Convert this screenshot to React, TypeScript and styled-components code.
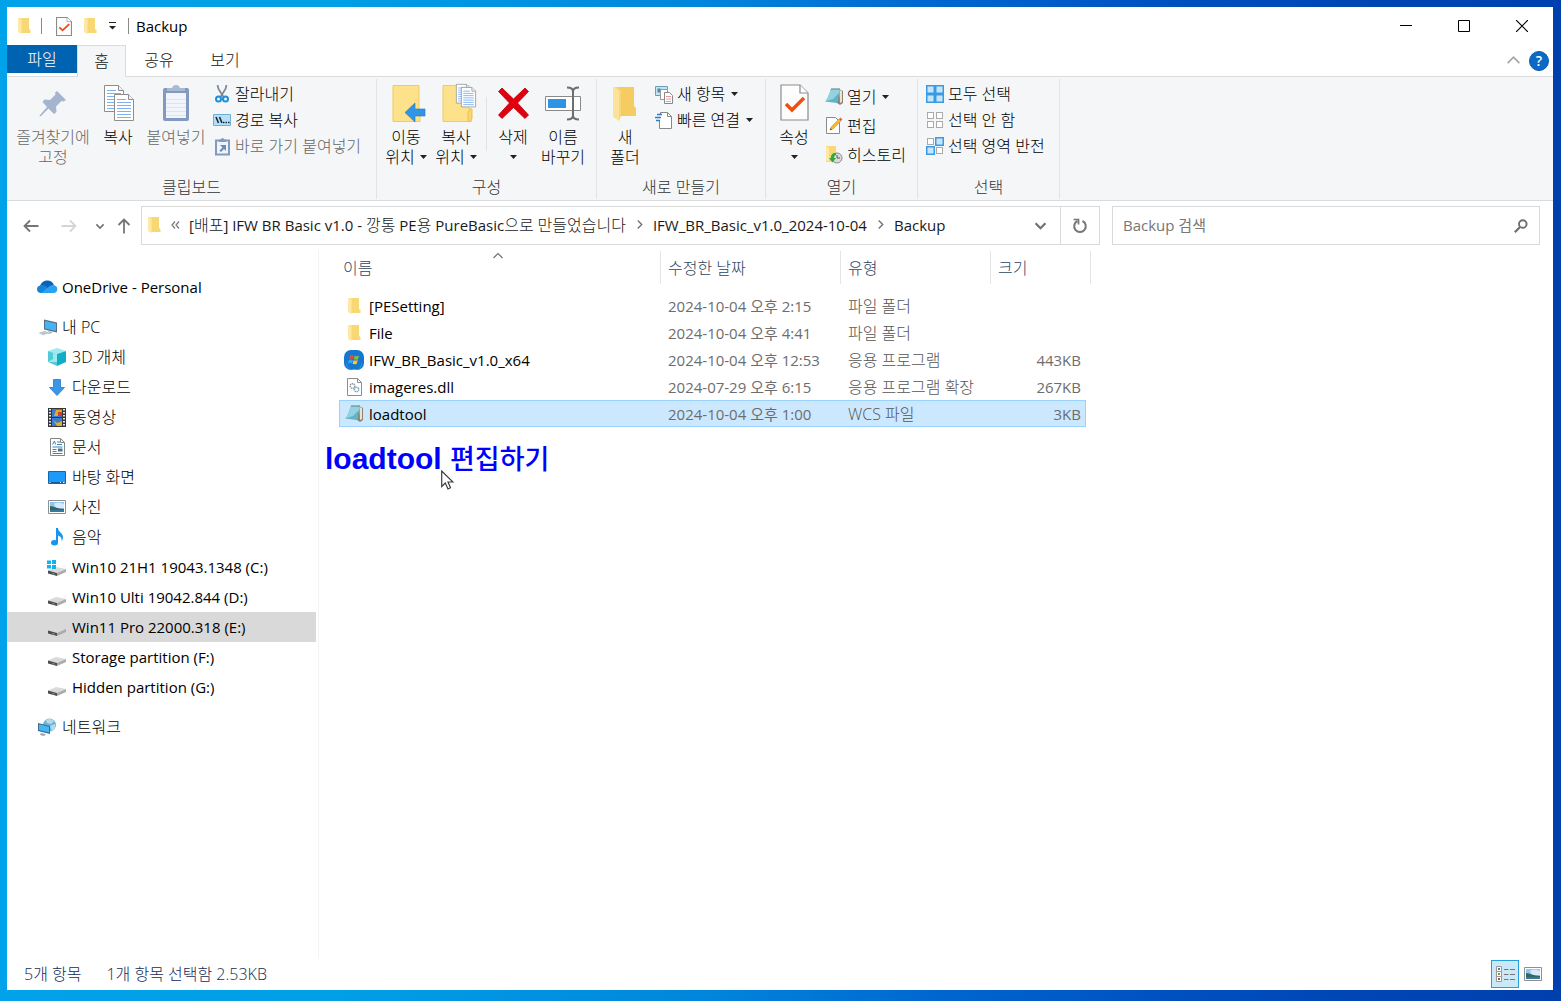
import React from "react";
import styled, { createGlobalStyle } from "styled-components";

const FONT = `"Open Sans", "Noto Sans CJK KR", sans-serif`;

const Global = createGlobalStyle`
  *, *::before, *::after { box-sizing: border-box; }
  body { margin: 0; }
  button, input { font: inherit; color: inherit; }
  button { border: 0; background: none; padding: 0; cursor: default; }
  ul { list-style: none; margin: 0; padding: 0; }
  svg { display: block; flex: none; }
`;

/* ---------- window frame ---------- */

const Desktop = styled.div`
  min-height: 100vh;
  display: flex;
  padding: 7px 8px 11px 7px;
  background: linear-gradient(90deg, #00a2ea 0%, #009fe6 22%, #0086dc 45%, #0067d0 60%, #0050c0 75%, #0045b4 88%, #0040ae 100%);
  font: 16px/20px ${FONT};
  color: #000;
`;

const Window = styled.div`
  flex: 1;
  min-width: 0;
  display: flex;
  flex-direction: column;
  background: #fff;
`;

const TitleBar = styled.header`
  display: flex;
  align-items: center;
  height: 38px;
  padding-left: 10px;
`;

const QuickTools = styled.div`
  display: flex;
  align-items: center;
  gap: 11px;
`;

const QuickButton = styled.button`
  display: flex;
  align-items: center;
  justify-content: center;
`;

const Bar = styled.span<{ $before: number; $after: number }>`
  width: 1px;
  height: 16px;
  margin: 0 ${(p) => p.$after}px 0 ${(p) => p.$before}px;
  background: #8a8a8a;
`;

const Title = styled.h1`
  flex: 1;
  margin: 0;
  font-size: 15px;
  font-weight: 400;
  line-height: 20px;
`;

const Caption = styled.div`
  display: flex;
  align-self: stretch;
  padding-right: 2px;
`;

const CaptionButton = styled.button`
  width: 58px;
  display: flex;
  align-items: center;
  justify-content: center;
`;

/* ---------- tabs and ribbon ---------- */

const TabBar = styled.nav`
  display: flex;
  height: 32px;
  border-bottom: 1px solid #dadbdc;
`;

const FileTab = styled.button`
  width: 70px;
  height: 28px;
  background: #0063b1;
  color: #fff;
  font-weight: 300;
`;

const Tab = styled.button<{ $active?: boolean }>`
  width: ${(p) => (p.$active ? 49 : 66)}px;
  height: ${(p) => (p.$active ? 32 : 31)}px;
  padding-bottom: 2px;
  border: ${(p) => (p.$active ? "1px solid #dadbdc" : "0")};
  border-bottom: 0;
  background: ${(p) => (p.$active ? "#f5f6f7" : "transparent")};
  color: #111;
  font-weight: 300;
`;

const TabEnd = styled.div`
  margin-left: auto;
  display: flex;
  align-items: center;
  gap: 9px;
  padding-right: 4px;
`;

const HelpButton = styled.button`
  width: 20px;
  height: 20px;
  border-radius: 50%;
  border: 1px solid #0b5ba5;
  background: #0a6ac8;
  color: #fff;
  font-size: 14px;
  font-weight: 600;
  line-height: 18px;
`;

const Ribbon = styled.div`
  display: flex;
  height: 124px;
  padding: 2px 0 1px;
  border-bottom: 1px solid #dadbdc;
  background: #f5f6f7;
  font-weight: 300;
`;

const Group = styled.section<{ $width: number; $pad: number }>`
  width: ${(p) => p.$width}px;
  display: flex;
  flex-direction: column;
  justify-content: space-between;
  padding-left: ${(p) => p.$pad}px;
  border-right: 1px solid #e2e3e4;
`;

const GroupBody = styled.div`
  display: flex;
  align-items: flex-start;
`;

const GroupLabel = styled.h2<{ $pad: number }>`
  margin: 0 0 0 -${(p) => p.$pad}px;
  font-size: 16px;
  font-weight: inherit;
  line-height: 24px;
  text-align: center;
  color: #333;
`;

const BigButton = styled.button<{ $width: number; $muted?: boolean }>`
  width: ${(p) => p.$width}px;
  display: flex;
  flex-direction: column;
  align-items: center;
  padding-top: 5px;
  white-space: nowrap;
  color: ${(p) => (p.$muted ? "#666" : "#000")};
`;

const BigIcon = styled.span`
  height: 43px;
  display: flex;
  align-items: flex-start;
`;

const Line = styled.span`
  display: flex;
  align-items: center;
  gap: 5px;
  height: 20px;
`;

const Rule = styled.span`
  width: 1px;
  height: 54px;
  margin: 18px 1px 0 5px;
  background: #e2e3e4;
`;

const Stack = styled.div<{ $indent: number; $row: number; $top?: number }>`
  display: grid;
  grid-auto-rows: ${(p) => p.$row}px;
  margin-left: ${(p) => p.$indent}px;
  padding-top: ${(p) => p.$top ?? 2}px;
`;

const SmallButton = styled.button<{ $muted?: boolean }>`
  display: flex;
  align-items: center;
  gap: 4px;
  white-space: nowrap;
  color: ${(p) => (p.$muted ? "#666" : "#000")};
`;

const IconSlot = styled.span`
  width: 18px;
  display: flex;
  justify-content: center;
`;

const MenuMark = styled.span`
  margin-left: 2px;
`;

/* ---------- address bar ---------- */

const AddressRow = styled.div`
  display: flex;
  align-items: center;
  height: 49px;
  padding: 0 13px 0 9px;
`;

const NavButton = styled.button<{ $width: number }>`
  width: ${(p) => p.$width}px;
  height: 38px;
  display: flex;
  align-items: center;
  justify-content: center;
`;

const AddressField = styled.div`
  flex: 1;
  min-width: 0;
  height: 39px;
  margin-right: 12px;
  display: flex;
  align-items: stretch;
  border: 1px solid #d9d9d9;
`;

const Crumbs = styled.div`
  flex: 1;
  min-width: 0;
  display: flex;
  align-items: center;
  padding: 0 0 2px 5px;
  overflow: hidden;
  white-space: nowrap;
  font-size: 15px;
`;

const Crumb = styled.button`
  color: #1a1a1a;
`;

const HangulRun = styled.span`
  font-size: 16px;
  font-weight: 300;
`;

const CrumbArrow = styled.span`
  width: 27px;
  display: flex;
  justify-content: center;
`;

const CrumbStart = styled.span`
  width: 28px;
  display: flex;
  justify-content: center;
`;

const FieldButton = styled.button<{ $line?: boolean }>`
  width: 39px;
  display: flex;
  align-items: center;
  justify-content: center;
  border-left: ${(p) => (p.$line ? "1px solid #d9d9d9" : "0")};
`;

const SearchField = styled.label`
  width: 428px;
  height: 39px;
  display: flex;
  align-items: center;
  padding: 0 11px 0 10px;
  border: 1px solid #d9d9d9;
`;

const SearchInput = styled.input`
  flex: 1;
  min-width: 0;
  border: 0;
  padding: 0 0 2px;
  outline: 0;
  background: none;
  font-size: 15px;
  line-height: 20px;
  &::placeholder {
    color: #767676;
    opacity: 1;
  }
`;

/* ---------- body ---------- */

const Body = styled.div`
  flex: 1;
  display: flex;
`;

const Sidebar = styled.nav`
  width: 312px;
  padding: 22px 2px 0 0;
  border-right: 1px solid #f3f3f3;
`;

const Tree = styled.ul`
  & + & {
    margin-top: 10px;
  }
`;

const TreeItem = styled.button<{ $child?: boolean; $selected?: boolean; $latin?: boolean }>`
  width: 100%;
  height: 30px;
  display: flex;
  align-items: center;
  gap: ${(p) => (p.$child ? 5 : 4)}px;
  padding-left: ${(p) => (p.$child ? 40 : 30)}px;
  background: ${(p) => (p.$selected ? "#d9d9d9" : "transparent")};
  font-size: ${(p) => (p.$latin ? 15 : 16)}px;
  font-weight: ${(p) => (p.$latin ? 400 : 300)};
  text-align: left;
`;

const TreeIcon = styled.span<{ $child?: boolean }>`
  width: ${(p) => (p.$child ? 20 : 21)}px;
  display: flex;
  justify-content: center;
`;

const Main = styled.main`
  flex: 1;
  min-width: 0;
  padding-left: 20px;
`;

const Table = styled.table`
  table-layout: fixed;
  width: 752px;
  border-collapse: separate;
  border-spacing: 0;
  font-size: 15px;
`;

const HeadCell = styled.th<{ $width: number }>`
  width: ${(p) => p.$width}px;
  height: 42px;
  padding: 1px 0 8px;
  font-size: 16px;
  font-weight: 300;
  text-align: left;
  vertical-align: top;
  color: #2c4566;
`;

const HeadButton = styled.button<{ $line?: boolean; $pad?: number }>`
  display: block;
  position: relative;
  width: 100%;
  height: 33px;
  padding-left: ${(p) => p.$pad ?? 7}px;
  border-right: ${(p) => (p.$line ? "1px solid #e5e5e5" : "0")};
  text-align: left;
`;

const SortMark = styled.span`
  position: absolute;
  top: 0;
  left: 50%;
  margin-left: -7px;
`;

const Row = styled.tr<{ $selected?: boolean }>`
  height: 27px;
  & > td {
    border: solid ${(p) => (p.$selected ? "#99d1ff" : "transparent")};
    border-width: 1px 0;
    background: ${(p) => (p.$selected ? "#cce8ff" : "transparent")};
  }
  & > td:first-child {
    border-left-width: 1px;
  }
  & > td:nth-child(4) {
    border-right-width: 1px;
  }
  & > td:last-child {
    border: 0;
    background: none;
  }
`;

const Cell = styled.td<{ $right?: boolean }>`
  padding: 0 ${(p) => (p.$right ? 4 : 0)}px 0 ${(p) => (p.$right ? 0 : 7)}px;
  white-space: nowrap;
  text-align: ${(p) => (p.$right ? "right" : "left")};
  color: #6d6d6d;
`;

const TypeCell = styled(Cell)`
  font-size: 16px;
  font-weight: 300;
  color: #555;
`;

const NameCell = styled.td`
  padding: 0 0 0 4px;
  color: #000;
`;

const FileName = styled.span`
  display: flex;
  align-items: center;
  gap: 5px;
`;

const FileIcon = styled.span`
  width: 20px;
  display: flex;
  justify-content: center;
`;

const Note = styled.p`
  position: relative;
  width: max-content;
  margin: 13px 0 0 -14px;
  font: 700 30px/38px "Liberation Sans", "Noto Sans CJK KR", sans-serif;
  color: #00f;
`;

const NoteKorean = styled.span`
  font-size: 27px;
  font-weight: 500;
`;

const Pointer = styled.span`
  position: absolute;
  left: 116px;
  top: 30px;
`;

const StatusBar = styled.footer`
  display: flex;
  align-items: center;
  gap: 25px;
  height: 32px;
  padding: 0 6px 0 17px;
  font-weight: 300;
  color: #142c55;
`;

const ViewButtons = styled.div`
  margin-left: auto;
  display: flex;
  align-items: center;
`;

const ViewButton = styled.button<{ $on?: boolean }>`
  width: 28px;
  height: 28px;
  display: flex;
  align-items: center;
  justify-content: center;
  border: 1px solid ${(p) => (p.$on ? "#26a0da" : "transparent")};
  background: ${(p) => (p.$on ? "#cbe8f6" : "transparent")};
`;

/* ---------- icons ---------- */

const Folder = () => (
  <svg width="14" height="18" viewBox="0 0 14 18">
    <path d="M3 1h9v11l1.500 1v3H3z" fill="#f8d775" />
    <path d="M1 1l3 2v14l-3-2z" fill="#fde9a5" />
    <path d="M4 3v14l1-1.500V1H1z" fill="#fbe08e" />
  </svg>
);

const Caret = () => (
  <svg width="7" height="4" viewBox="0 0 7 4">
    <path d="M0 0h7L3.500 4z" fill="#222" />
  </svg>
);

const CheckPage = ({ w, h }: { w: number; h: number }) => (
  <svg width={w} height={h} viewBox="0 0 29 37" preserveAspectRatio="none">
    <path d="M1 1h19l8 8v27H1z" fill="#fdfdfd" stroke="#8c8c8c" strokeWidth={w < 20 ? 2 : 1.2} />
    <path d="M20 1v8h8" fill="#fff" stroke="#8c8c8c" strokeWidth="1.200" />
    <path d="M6 20l6 6 12-12" fill="none" stroke="#f04e12" strokeWidth="3.500" />
  </svg>
);

const Pin = () => (
  <svg width="28" height="40" viewBox="0 0 28 40">
    <path d="M18 7l9 9-2.500 1.500-2-.5-5.500 5.500.5 5.500-2.500 2-5.500-5.500L2 32l-1.500.5L1 31l7-8-4.500-5 2-2.500 5.500.5 5.500-5.500-.5-2z" fill="#a4b5d0" />
  </svg>
);

const sheet = (x: number, y: number) => (
  <g transform={`translate(${x} ${y})`}>
    <path d="M.5.5h14l5 5v21H.5z" fill="#fff" stroke="#8d8d8d" />
    <path d="M14.500.5v5h5" fill="#f2f2f2" stroke="#8d8d8d" />
    <path d="M3 5.500h9M3 8.500h14M3 11.500h14M3 14.500h14M3 17.500h14M3 20.500h14M3 23.500h14" stroke="#7db2f2" strokeWidth="1.200" />
  </g>
);

const CopyPages = () => (
  <svg width="31" height="38" viewBox="0 0 31 38">
    {sheet(1, 1)}
    {sheet(11, 10)}
  </svg>
);

const Clipboard = () => (
  <svg width="28" height="38" viewBox="0 0 28 38">
    <rect x="1" y="4" width="26" height="33" rx="2" fill="#8299c0" />
    <rect x="4" y="9" width="20" height="25" fill="#f1f5fb" />
    <path d="M5 7h18V4h-5c-1-4-7-4-8 0H5z" fill="#aab9d2" />
    <path d="M4 15.500h20M4 19.500h20M4 23.500h20M4 27.500h20M4 31.500h20" stroke="#dbe4f1" />
  </svg>
);

const Scissors = () => (
  <svg width="14" height="18" viewBox="0 0 14 18">
    <path d="M2.500 0l1 4 5 8M11.500 0l-1 4-5 8" fill="none" stroke="#7d8790" strokeWidth="1.700" />
    <circle cx="3.500" cy="14" r="2.500" fill="none" stroke="#1d8fdd" strokeWidth="2" />
    <circle cx="10.500" cy="14" r="2.500" fill="none" stroke="#1d8fdd" strokeWidth="2" />
  </svg>
);

const PathIcon = () => (
  <svg width="18" height="12" viewBox="0 0 18 12">
    <path d="M.5.5h17v11H.5z" fill="#b6e0f9" stroke="#71aed4" />
    <path d="M3 3l2.500 6M6.500 3L9 9" stroke="#1a2a38" strokeWidth="1.600" />
    <path d="M10 8.500h1.500M12.500 8.500H14M15 8.500h1.500" stroke="#1a2a38" strokeWidth="1.500" />
  </svg>
);

const ShortcutPaste = () => (
  <svg width="15" height="19" viewBox="0 0 15 19">
    <path d="M1 3.500h13v14H1z" fill="#eff4fb" stroke="#8299c0" strokeWidth="2" />
    <path d="M4 5V2.500h2a1.500 1.500 0 013 0h2V5z" fill="#8299c0" />
    <path d="M5 8h6v6L9 12l-3 3-1.500-1.500 3-3z" fill="#7189b2" />
  </svg>
);

const MoveTo = () => (
  <svg width="34" height="40" viewBox="-2 0 34 40" overflow="visible">
    <path d="M2 1.500h26v30h1v6H2z" fill="#fde18b" stroke="#f1cc5c" />
    <path d="M14 28.500L24 19v6h10v7H24v6z" fill="#3294e4" stroke="#2079c8" strokeWidth=".6" />
  </svg>
);

const CopyTo = () => (
  <svg width="34" height="40" viewBox="-3 0 34 40" overflow="visible">
    <path d="M1 1.500h26V25h2v12.500H1z" fill="#fde18b" stroke="#f1cc5c" />
    <path d="M26 37.500V28l2-3h2v9l-1 3.500z" fill="#fbd66e" stroke="#ecc24f" />
    <g transform="translate(14 0) scale(.72)">{sheet(0, 0)}</g>
    <g transform="translate(19 3) scale(.75)">{sheet(0, 0)}</g>
  </svg>
);

const DeleteX = () => (
  <svg width="34" height="40" viewBox="-1 0 34 40">
    <path d="M1.500 7.500L5 4l11.500 11L28 4l3.500 3.500L20.500 19 31.500 31 28 34.500 16.500 23.500 5 34.500 1.500 31 12.500 19z" fill="#e2000f" stroke="#b3000c" strokeWidth=".8" />
  </svg>
);

const Rename = () => (
  <svg width="36" height="40" viewBox="0 0 36 40">
    <path d="M.5 12.500h35v14H.5z" fill="#fff" stroke="#8a8a8a" />
    <path d="M3 15h18v9H3z" fill="#2f93e6" />
    <path d="M22 3.500c4 0 6 1 6 4v24c0 3-2 4-6 4M34 3.500c-4 0-6 1-6 4v24c0 3 2 4 6 4" fill="none" stroke="#6e6e6e" strokeWidth="2" />
  </svg>
);

const BigFolder = () => (
  <svg width="26" height="40" viewBox="0 0 26 40">
    <path d="M6 3h16v19l2 2v8H6z" fill="#f5cc62" />
    <path d="M1 3h3l5 4v24l-2 6-6-4z" fill="#fde39a" />
    <path d="M3 3h3l3 4v25l-2 5V7z" fill="#f9d67a" />
  </svg>
);

const NewItem = () => (
  <svg width="18" height="19" viewBox="0 0 18 19">
    <path d="M.5 1.500h12v9H.5z" fill="#c3e4f2" stroke="#6d9cb3" />
    <path d="M2.500 3.500h3v4h-3z" fill="#4c89a8" />
    <path d="M5.500 4.500h7v10h-7z" fill="#fff" stroke="#999" />
    <path d="M9.500 7.500h5l3 3v8h-8z" fill="#fff" stroke="#888" />
    <path d="M11 11.500h5M11 14h5M11 16.500h5" stroke="#e79d9d" />
  </svg>
);

const QuickAccess = () => (
  <svg width="18" height="19" viewBox="0 0 18 19">
    <path d="M4.500 10v7.500h12v-12l-4-4h-7v2" fill="#fff" stroke="#888" />
    <path d="M12.500 1.500v4h4" fill="none" stroke="#888" />
    <path d="M2 3.500h5M0 6.500h6M1 9.500h4" stroke="#2f7cc0" strokeWidth="1.300" />
  </svg>
);

const Notepad = () => (
  <svg width="20" height="18" viewBox="0 0 20 18">
    <path d="M15 1l4 2v12l-3 2-3-2z" fill="#8b8373" />
    <path d="M15.500 2L18 3v11l-2 1z" fill="#e9e4d8" />
    <path d="M7 1h9l-3 14-12-1.500C4 11 5 6 7 1z" fill="#5fb3c8" />
    <path d="M7 1h9l-1 4-6 6-8 2.500C4 11 5 6 7 1z" fill="#93d2df" />
    <path d="M7 1h9" stroke="#6c8d96" strokeWidth="1.200" />
  </svg>
);

const EditPage = () => (
  <svg width="18" height="19" viewBox="0 0 18 19">
    <path d="M1.500 1.500h9l4 4v12h-13z" fill="#fff" stroke="#8a8a8a" />
    <path d="M5 14l1-3 8-8 2 2-8 8z" fill="#f5b92e" stroke="#c98d1c" strokeWidth=".5" />
    <path d="M14 3l1.500-1.500 2 2L16 5z" fill="#e0605a" />
    <path d="M5 14l.5-1.800L7 13.500z" fill="#333" />
  </svg>
);

const HistoryIcon = () => (
  <svg width="18" height="19" viewBox="0 0 18 19">
    <path d="M1 1h10v8l1 1v7H1z" fill="#f8d775" />
    <path d="M1 1l3 2v14l-3-2z" fill="#fde9a5" />
    <circle cx="12" cy="13" r="5" fill="#dcdcdc" stroke="#8b8b8b" />
    <path d="M12 10v3h3" fill="none" stroke="#555" />
    <path d="M11 8c-4 0-5 2-5 5H4l3.500 4.500L11 13H9c0-2 1-3 2-3z" fill="#2fa83c" />
  </svg>
);

const Squares = ({ on }: { on: number[] }) => (
  <svg width="18" height="18" viewBox="0 0 18 18">
    {[0, 1, 2, 3].map((i) => {
      const lit = on.includes(i);
      const x = (i % 2) * 9;
      const y = i > 1 ? 9 : 0;
      const inset = lit ? 0.75 : 1.5;
      const size = lit ? 7.5 : 6;
      return (
        <rect
          key={i}
          x={x + inset}
          y={y + inset}
          width={size}
          height={size}
          fill={lit ? "#c4e5fb" : "#fff"}
          stroke={lit ? "#3c9ae3" : "#aaa"}
          strokeWidth={lit ? 1.5 : 1}
        />
      );
    })}
  </svg>
);

const Arrow = ({ turn = 0, color = "#757575" }: { turn?: number; color?: string }) => (
  <svg width="16" height="16" viewBox="0 0 16 16">
    <path d="M15.500 8H1.500M7 2.500L1.500 8 7 13.500" transform={`rotate(${turn} 8 8)`} fill="none" stroke={color} strokeWidth="1.800" />
  </svg>
);

const Chevron = ({ size = 10, turn = 0, color = "#707070", weight = 2 }: { size?: number; turn?: number; color?: string; weight?: number }) => (
  <svg width={size} height={size} viewBox="0 0 10 10" overflow="visible">
    <path d="M.5 3L5 7.500 9.500 3" transform={`rotate(${turn} 5 5)`} fill="none" stroke={color} strokeWidth={weight} />
  </svg>
);

const DoubleChevron = () => (
  <svg width="9" height="8" viewBox="0 0 9 8">
    <path d="M4 .5L1 4l3 3.500M8 .5L5 4l3 3.500" fill="none" stroke="#777" strokeWidth="1.200" />
  </svg>
);

const Refresh = () => (
  <svg width="16" height="16" viewBox="0 0 16 16">
    <path d="M10.500 3a5.800 5.800 0 11-5 0" fill="none" stroke="#777" strokeWidth="2" />
    <path d="M1.500 1.500h5v5" fill="none" stroke="#777" strokeWidth="1.700" />
  </svg>
);

const Magnifier = () => (
  <svg width="14" height="14" viewBox="0 0 14 14">
    <circle cx="8.800" cy="5" r="3.800" fill="none" stroke="#6e6e6e" strokeWidth="1.900" />
    <path d="M6 8l-5.200 5.200" stroke="#6e6e6e" strokeWidth="2.200" />
  </svg>
);

const Cloud = () => (
  <svg width="21" height="14" viewBox="0 0 20 14" preserveAspectRatio="none">
    <path d="M3 6C4 2 7 .5 10 .5c3 0 5 1.500 6 4.500l-6 4z" fill="#0a62b8" />
    <path d="M4 13a3.800 3.800 0 01-1-7.500c3-1 5 0 7 2L6 13z" fill="#1583d8" />
    <path d="M4 13l7-6c2-2 4-2.500 6-1.500A4 4 0 0116.500 13z" fill="#2ba2f0" />
  </svg>
);

const Computer = () => (
  <svg width="20" height="17" viewBox="0 0 20 17">
    <path d="M6 .5l13 3v10l-13-3z" fill="#5a6d7c" />
    <path d="M7 2l11 2.500v7.500L7 9.500z" fill="#45b3f4" />
    <path d="M11 12l4 1-3 2-4-1z" fill="#b3bac0" />
    <path d="M0 14l7-2 5 2-7 2.500z" fill="#d2d6d9" />
    <path d="M2 14l6-1.500M4 15l6-1.500" stroke="#a5abb0" strokeWidth=".6" />
  </svg>
);

const Cube = () => (
  <svg width="18" height="18" viewBox="0 0 18 18">
    <path d="M9 0l9 3-9 3-9-3z" fill="#9deaf0" />
    <path d="M0 3l9 3v12l-9-4z" fill="#52cbd8" />
    <path d="M18 3L9 6v12l9-4z" fill="#10aec6" />
    <path d="M5 5l4 1v8l-9 0 5-3z" fill="#b9f1f4" opacity=".75" />
  </svg>
);

const Download = () => (
  <svg width="16" height="17" viewBox="0 0 16 17">
    <path d="M4.500.5h7v8h4L8 16.500.5 8.500h4z" fill="#3a97e8" stroke="#2079c8" strokeWidth=".8" />
  </svg>
);

const Film = () => (
  <svg width="18" height="19" viewBox="0 0 18 19">
    <path d="M0 0h18v19H0z" fill="#35353a" />
    <path d="M2 1v17M16 1v17" stroke="#e8e8e8" strokeWidth="2" strokeDasharray="1.500 1.500" />
    <path d="M4 1h10v8H4zM4 10h10v8H4z" fill="#3a7bd0" />
    <path d="M8 2h6v3l-4 3H6z" fill="#e0a930" />
    <path d="M10 4h4v4h-4z" fill="#c9442d" />
    <path d="M5 12l4 3 5-2v5H9z" fill="#d4b02e" />
  </svg>
);

const Doc = () => (
  <svg width="15" height="18" viewBox="0 0 15 18">
    <path d="M.5.5h10l4 4v13H.5z" fill="#fff" stroke="#858585" />
    <path d="M10.500.5v4h4" fill="none" stroke="#858585" />
    <path d="M2.500 6.500L4.500 3l1 3.500M7 4h3M7 6.500h5M2.500 9h10M2.500 11.500h4M2.500 13.500h4M2.500 15.500h10" fill="none" stroke="#3d86bd" />
    <path d="M8 10.500h4.500v3H8z" fill="#4a7390" />
  </svg>
);

const DesktopIcon = () => (
  <svg width="18" height="13" viewBox="0 0 18 13">
    <path d="M.5.5h17v12H.5z" fill="#1b9bf7" stroke="#1268ae" />
    <path d="M1 11.500h16" stroke="#0e5a9a" />
    <path d="M1.500 11.500h1M12 11.500h1M15 11.500h1.500" stroke="#fff" />
  </svg>
);

const Picture = () => (
  <svg width="18" height="14" viewBox="0 0 18 14">
    <path d="M.5.5h17v13H.5z" fill="#fff" stroke="#8f8f8f" />
    <path d="M2 2h14v10H2z" fill="#8fc5f3" />
    <path d="M6 4c3-2 7-1 10 0v4H8z" fill="#d6eaf9" />
    <path d="M2 6c4 0 7 3 14 3v3H2z" fill="#2f6a5b" />
    <path d="M2 10h14v2H2z" fill="#3b74a8" />
  </svg>
);

const Music = () => (
  <svg width="12" height="18" viewBox="0 0 12 18">
    <ellipse cx="3.500" cy="14.800" rx="3.500" ry="2.700" fill="#1496ee" />
    <path d="M5 0h2c0 4 5 5 5 9 0 1.500-.5 3-1.500 4 .5-3-1-5-3.500-5.500V15H5z" fill="#1496ee" />
  </svg>
);

const Drive = ({ win }: { win?: boolean }) => (
  <svg width="20" height="17" viewBox="0 0 20 17">
    <path d="M1 11.500l8-3.500 10 2-9 4z" fill="#dadada" />
    <path d="M1 11.500l9 2.500v3l-9-2.500z" fill="#4b4f4c" />
    <path d="M10 14l9-4v3l-9 4z" fill="#ababab" />
    <path d="M5.500 14.500l2 .6" stroke="#53d06a" />
    {win && <path d="M0 1.500h4v3.500H0zM5 1h4v4H5zM0 6h4v3.500H0zM5 6h4v4H5z" fill="#10b3ee" />}
  </svg>
);

const Network = () => (
  <svg width="20" height="18" viewBox="1 0 20 18">
    <circle cx="12.500" cy="7" r="6.500" fill="#6db3d8" />
    <path d="M9 2c3-2 6-1 8 1l-3 3-4-1zM13 8l5-2c1 3-1 6-3 7z" fill="#b5dbe8" />
    <path d="M1 5l12 3v8L1 13z" fill="#3b6d91" />
    <path d="M2 6.200l10 2.600v5.700L2 12z" fill="#47b4f4" />
    <path d="M4 15l5 1.200L7 18l-4-1z" fill="#9aa7b1" />
  </svg>
);

const AppIcon = () => (
  <svg width="20" height="20" viewBox="0 0 20 20">
    <rect width="20" height="20" rx="7" fill="#1577cf" />
    <path d="M2 12a8 8 0 0016 0v2a6 6 0 01-6 5H8a6 6 0 01-6-5z" fill="#35c3f5" />
    <path d="M6 5.500c1.500-1 2.500-.5 4 0L9 9c-1.500-.5-2.500-.7-4 .2z" fill="#ef4a2a" />
    <path d="M10.800 5.800c1.500.6 2.700.5 4.200-.3l-1 3.800c-1.500.8-2.700.5-4.200 0z" fill="#7fc241" />
    <path d="M4.800 10c1.500-.9 2.500-.7 4 0l-1 3.500c-1.500-.6-2.500-.6-4 .2z" fill="#35a5ee" />
    <path d="M9.500 10.300c1.500.6 2.700.5 4.200-.2l-1 3.700c-1.500.8-2.700.5-4.200 0z" fill="#fcc72b" />
  </svg>
);

const DllIcon = () => (
  <svg width="15" height="18" viewBox="0 0 15 18">
    <path d="M.5.5h10l4 4v13H.5z" fill="#fff" stroke="#8d8d8d" />
    <path d="M10.500.5v4h4" fill="none" stroke="#8d8d8d" />
    <circle cx="5.500" cy="8" r="2.300" fill="none" stroke="#8a9199" strokeWidth="1.500" strokeDasharray="1.200 .6" />
    <circle cx="9.500" cy="11.500" r="2.200" fill="none" stroke="#6ea0c4" strokeWidth="1.500" strokeDasharray="1.200 .6" />
  </svg>
);

const DetailsIcon = () => (
  <svg width="19" height="17" viewBox="0 0 19 17">
    <path d="M.5.500h5v5h-5zM.5 5.500h5v5h-5zM.5 10.500h5v5h-5z" fill="#fff" stroke="#999" />
    <path d="M2 2h2v2H2z" fill="#3a8a9c" />
    <path d="M2 7h2v2H2z" fill="#a5862e" />
    <path d="M2 12h2v2H2z" fill="#c5412f" />
    <path d="M8 3.500h4.500M14 3.500h5M8 8.500h4.500M14 8.500h5M8 13.500h4.500M14 13.500h5" stroke="#777" />
  </svg>
);

const Cursor = () => (
  <svg width="13" height="20" viewBox="0 0 13 20">
    <path d="M.7 1v15.500l3.600-3.500 2.700 6 2.500-1.200L7 12h5z" fill="#fff" stroke="#3a3a44" strokeWidth="1.200" />
  </svg>
);

/* ---------- data ---------- */

type Place = { label: string; icon: React.ReactNode; child?: boolean; latin?: boolean; selected?: boolean };

const places: Place[][] = [
  [{ label: "OneDrive - Personal", icon: <Cloud />, latin: true }],
  [
    { label: "내 PC", icon: <Computer /> },
    { label: "3D 개체", icon: <Cube />, child: true },
    { label: "다운로드", icon: <Download />, child: true },
    { label: "동영상", icon: <Film />, child: true },
    { label: "문서", icon: <Doc />, child: true },
    { label: "바탕 화면", icon: <DesktopIcon />, child: true },
    { label: "사진", icon: <Picture />, child: true },
    { label: "음악", icon: <Music />, child: true },
    { label: "Win10 21H1 19043.1348 (C:)", icon: <Drive win />, child: true, latin: true },
    { label: "Win10 Ulti 19042.844 (D:)", icon: <Drive />, child: true, latin: true },
    { label: "Win11 Pro 22000.318 (E:)", icon: <Drive />, child: true, latin: true, selected: true },
    { label: "Storage partition (F:)", icon: <Drive />, child: true, latin: true },
    { label: "Hidden partition (G:)", icon: <Drive />, child: true, latin: true },
  ],
  [{ label: "네트워크", icon: <Network /> }],
];

const files = [
  { name: "[PESetting]", icon: <Folder />, date: "2024-10-04 오후 2:15", type: "파일 폴더", size: "" },
  { name: "File", icon: <Folder />, date: "2024-10-04 오후 4:41", type: "파일 폴더", size: "" },
  { name: "IFW_BR_Basic_v1.0_x64", icon: <AppIcon />, date: "2024-10-04 오후 12:53", type: "응용 프로그램", size: "443KB" },
  { name: "imageres.dll", icon: <DllIcon />, date: "2024-07-29 오후 6:15", type: "응용 프로그램 확장", size: "267KB" },
  { name: "loadtool", icon: <Notepad />, date: "2024-10-04 오후 1:00", type: "WCS 파일", size: "3KB", selected: true },
];

/* ---------- pieces ---------- */

/* Hangul is set one size above the Latin text it runs beside. */
const Mixed = ({ text }: { text: string }) => (
  <>
    {text.split(/([가-힣]+)/).map((run, i) => (i % 2 ? <HangulRun key={i}>{run}</HangulRun> : run))}
  </>
);

type BigProps = { icon: React.ReactNode; lines: string[]; width?: number; muted?: boolean; menu?: boolean };

const Big = ({ icon, lines, width = 50, muted, menu }: BigProps) => (
  <BigButton $width={width} $muted={muted}>
    <BigIcon>{icon}</BigIcon>
    {lines.map((line, i) => (
      <Line key={line}>
        {line}
        {menu && i === 1 && <Caret />}
      </Line>
    ))}
    {menu && lines.length === 1 && (
      <Line>
        <Caret />
      </Line>
    )}
  </BigButton>
);

type SmallProps = { icon: React.ReactNode; label: string; muted?: boolean; menu?: boolean };

const Small = ({ icon, label, muted, menu }: SmallProps) => (
  <SmallButton $muted={muted}>
    <IconSlot>{icon}</IconSlot>
    {label}
    {menu && (
      <MenuMark>
        <Caret />
      </MenuMark>
    )}
  </SmallButton>
);

const RibbonGroup = ({ label, width, pad, children }: { label: string; width: number; pad: number; children: React.ReactNode }) => (
  <Group $width={width} $pad={pad}>
    <GroupBody>{children}</GroupBody>
    <GroupLabel $pad={pad}>{label}</GroupLabel>
  </Group>
);

export default function App() {
  return (
    <Desktop>
      <Global />
      <Window>
        <TitleBar>
          <QuickTools>
            <QuickButton aria-label="폴더">
              <Folder />
            </QuickButton>
          </QuickTools>
          <Bar $before={10} $after={14} />
          <QuickTools>
            <QuickButton aria-label="속성">
              <CheckPage w={16} h={19} />
            </QuickButton>
            <QuickButton aria-label="새 폴더">
              <Folder />
            </QuickButton>
            <QuickButton aria-label="빠른 실행 도구 모음 사용자 지정">
              <svg width="9" height="8" viewBox="0 0 9 8">
                <path d="M1 .5h7" stroke="#222" />
                <path d="M1 4h7L4.500 7.500z" fill="#222" />
              </svg>
            </QuickButton>
          </QuickTools>
          <Bar $before={11} $after={7} />
          <Title>Backup</Title>
          <Caption>
            <CaptionButton aria-label="최소화">
              <svg width="12" height="12" viewBox="0 0 12 12">
                <path d="M0 5.500h12" stroke="#000" />
              </svg>
            </CaptionButton>
            <CaptionButton aria-label="최대화">
              <svg width="12" height="12" viewBox="0 0 12 12">
                <path d="M.5.5h11v11H.5z" fill="none" stroke="#000" />
              </svg>
            </CaptionButton>
            <CaptionButton aria-label="닫기">
              <svg width="12" height="12" viewBox="0 0 12 12">
                <path d="M0 0l12 12M12 0L0 12" stroke="#000" strokeWidth="1.200" />
              </svg>
            </CaptionButton>
          </Caption>
        </TitleBar>

        <TabBar>
          <FileTab>파일</FileTab>
          <Tab $active>홈</Tab>
          <Tab>공유</Tab>
          <Tab>보기</Tab>
          <TabEnd>
            <Chevron size={13} turn={180} color="#a5a5a5" weight={1.3} />
            <HelpButton>?</HelpButton>
          </TabEnd>
        </TabBar>

        <Ribbon>
          <RibbonGroup label="클립보드" width={370} pad={7}>
            <Big icon={<Pin />} lines={["즐겨찾기에", "고정"]} width={78} muted />
            <Big icon={<CopyPages />} lines={["복사"]} width={52} />
            <Big icon={<Clipboard />} lines={["붙여넣기"]} width={64} muted />
            <Stack $indent={5} $row={26}>
              <Small icon={<Scissors />} label="잘라내기" />
              <Small icon={<PathIcon />} label="경로 복사" />
              <Small icon={<ShortcutPaste />} label="바로 가기 붙여넣기" muted />
            </Stack>
          </RibbonGroup>
          <RibbonGroup label="구성" width={220} pad={4}>
            <Big icon={<MoveTo />} lines={["이동", "위치"]} menu />
            <Big icon={<CopyTo />} lines={["복사", "위치"]} menu />
            <Rule />
            <Big icon={<DeleteX />} lines={["삭제"]} menu />
            <Big icon={<Rename />} lines={["이름", "바꾸기"]} />
          </RibbonGroup>
          <RibbonGroup label="새로 만들기" width={169} pad={3}>
            <Big icon={<BigFolder />} lines={["새", "폴더"]} />
            <Stack $indent={5} $row={26}>
              <Small icon={<NewItem />} label="새 항목" menu />
              <Small icon={<QuickAccess />} label="빠른 연결" menu />
            </Stack>
          </RibbonGroup>
          <RibbonGroup label="열기" width={152} pad={3}>
            <Big icon={<CheckPage w={29} h={37} />} lines={["속성"]} menu />
            <Stack $indent={6} $row={29} $top={3}>
              <Small icon={<Notepad />} label="열기" menu />
              <Small icon={<EditPage />} label="편집" />
              <Small icon={<HistoryIcon />} label="히스토리" />
            </Stack>
          </RibbonGroup>
          <RibbonGroup label="선택" width={142} pad={3}>
            <Stack $indent={5} $row={26}>
              <Small icon={<Squares on={[0, 1, 2, 3]} />} label="모두 선택" />
              <Small icon={<Squares on={[]} />} label="선택 안 함" />
              <Small icon={<Squares on={[1, 2]} />} label="선택 영역 반전" />
            </Stack>
          </RibbonGroup>
        </Ribbon>

        <AddressRow>
          <NavButton $width={30} aria-label="뒤로">
            <Arrow />
          </NavButton>
          <NavButton $width={46} aria-label="앞으로">
            <Arrow turn={180} color="#d5d5d5" />
          </NavButton>
          <NavButton $width={15} aria-label="최근 위치">
            <Chevron size={8} />
          </NavButton>
          <NavButton $width={34} aria-label="위로">
            <Arrow turn={90} />
          </NavButton>
          <AddressField>
            <Crumbs>
              <Folder />
              <CrumbStart>
                <DoubleChevron />
              </CrumbStart>
              <Crumb>
                <Mixed text="[배포] IFW BR Basic v1.0 - 깡통 PE용 PureBasic으로 만들었습니다" />
              </Crumb>
              <CrumbArrow>
                <Chevron size={9} turn={-90} weight={1.5} />
              </CrumbArrow>
              <Crumb>IFW_BR_Basic_v1.0_2024-10-04</Crumb>
              <CrumbArrow>
                <Chevron size={9} turn={-90} weight={1.5} />
              </CrumbArrow>
              <Crumb>Backup</Crumb>
            </Crumbs>
            <FieldButton aria-label="이전 위치">
              <Chevron size={11} />
            </FieldButton>
            <FieldButton $line aria-label="새로 고침">
              <Refresh />
            </FieldButton>
          </AddressField>
          <SearchField>
            <SearchInput type="text" placeholder="Backup 검색" aria-label="Backup 검색" />
            <Magnifier />
          </SearchField>
        </AddressRow>

        <Body>
          <Sidebar>
            {places.map((branch) => (
              <Tree key={branch[0].label}>
                {branch.map((p) => (
                  <li key={p.label}>
                    <TreeItem $child={p.child} $selected={p.selected} $latin={p.latin}>
                      <TreeIcon $child={p.child}>{p.icon}</TreeIcon>
                      {p.label}
                    </TreeItem>
                  </li>
                ))}
              </Tree>
            ))}
          </Sidebar>
          <Main>
            <Table>
              <thead>
                <tr>
                  <HeadCell $width={322}>
                    <HeadButton $line $pad={4}>
                      이름
                      <SortMark>
                        <Chevron size={10} turn={180} weight={1.2} />
                      </SortMark>
                    </HeadButton>
                  </HeadCell>
                  <HeadCell $width={180}>
                    <HeadButton $line>수정한 날짜</HeadButton>
                  </HeadCell>
                  <HeadCell $width={150}>
                    <HeadButton $line>유형</HeadButton>
                  </HeadCell>
                  <HeadCell $width={95}>
                    <HeadButton>크기</HeadButton>
                  </HeadCell>
                  <HeadCell $width={5} aria-hidden>
                    <HeadButton $line $pad={0} tabIndex={-1} />
                  </HeadCell>
                </tr>
              </thead>
              <tbody>
                {files.map((f) => (
                  <Row key={f.name} $selected={f.selected}>
                    <NameCell>
                      <FileName>
                        <FileIcon>{f.icon}</FileIcon>
                        {f.name}
                      </FileName>
                    </NameCell>
                    <Cell>{f.date}</Cell>
                    <TypeCell>{f.type}</TypeCell>
                    <Cell $right>{f.size}</Cell>
                    <td />
                  </Row>
                ))}
              </tbody>
            </Table>
            <Note>
              loadtool <NoteKorean>편집하기</NoteKorean>
              <Pointer>
                <Cursor />
              </Pointer>
            </Note>
          </Main>
        </Body>

        <StatusBar>
          <span>5개 항목</span>
          <span>1개 항목 선택함 2.53KB</span>
          <ViewButtons>
            <ViewButton $on aria-label="자세히">
              <DetailsIcon />
            </ViewButton>
            <ViewButton aria-label="큰 아이콘">
              <Picture />
            </ViewButton>
          </ViewButtons>
        </StatusBar>
      </Window>
    </Desktop>
  );
}
